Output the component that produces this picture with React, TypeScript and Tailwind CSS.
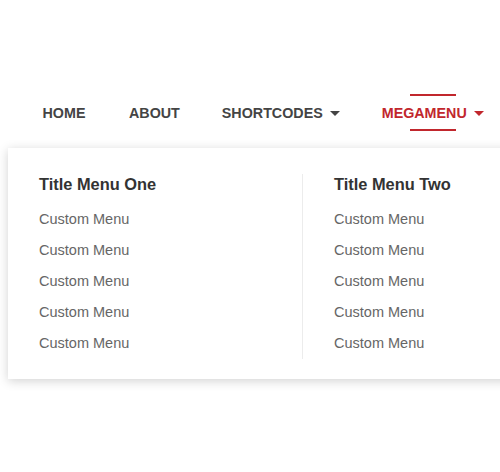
import React from 'react';

type NavItem = { label: string; caret?: boolean; active?: boolean };

const navItems: NavItem[] = [
  { label: 'HOME' },
  { label: 'ABOUT' },
  { label: 'SHORTCODES', caret: true },
  { label: 'MEGAMENU', caret: true, active: true },
];

const columns = [
  { title: 'Title Menu One', links: Array(5).fill('Custom Menu') },
  { title: 'Title Menu Two', links: Array(5).fill('Custom Menu') },
];

const Caret: React.FC<{ active?: boolean }> = ({ active }) => (
  <span
    className={`ml-[7px] inline-block h-0 w-0 border-x-[5px] border-t-[5px] border-x-transparent ${
      active ? 'border-t-[#c1272d]' : 'border-t-[#444]'
    }`}
  />
);

const NavLink: React.FC<NavItem> = ({ label, caret, active }) => (
  <li className="flex flex-col items-center px-[21px]">
    <span className={`h-[2px] w-[46px] ${active ? 'bg-[#c1272d]' : 'bg-transparent'}`} />
    <a
      href="#"
      className={`mt-[7px] flex items-center text-[14.3px] font-bold leading-[20px] ${
        active ? 'text-[#c1272d]' : 'text-[#444]'
      }`}
    >
      {label}
      {caret && <Caret active={active} />}
    </a>
    <span className={`mt-[6px] h-[2px] w-[46px] ${active ? 'bg-[#c1272d]' : 'bg-transparent'}`} />
  </li>
);

export default function App() {
  return (
    <div className="h-[472px] w-[500px] overflow-hidden bg-white pt-[94px] font-['Liberation_Sans',Arial,sans-serif]">
      <ul className="flex pl-[20px]">
        {navItems.map((item) => (
          <NavLink key={item.label} {...item} />
        ))}
      </ul>

      {/* mega menu dropdown, wider than the viewport */}
      <div className="ml-[8px] mt-[17px] flex w-[640px] bg-white pb-[20px] pt-[26px] shadow-[0_2px_10px_rgba(0,0,0,0.18)]">
        {columns.map((col, i) => (
          <div
            key={col.title}
            className={`w-[294px] ${i === 0 ? 'pl-[31px]' : 'border-l border-[#ececec] pl-[31px]'}`}
          >
            <h3 className="text-[16.4px] font-bold leading-[20px] text-[#333]">{col.title}</h3>
            <ul className="mt-[10px]">
              {col.links.map((link, j) => (
                <li key={j} className="text-[14.5px] leading-[31px] text-[#666]">
                  <a href="#">{link}</a>
                </li>
              ))}
            </ul>
          </div>
        ))}
      </div>
    </div>
  );
}
